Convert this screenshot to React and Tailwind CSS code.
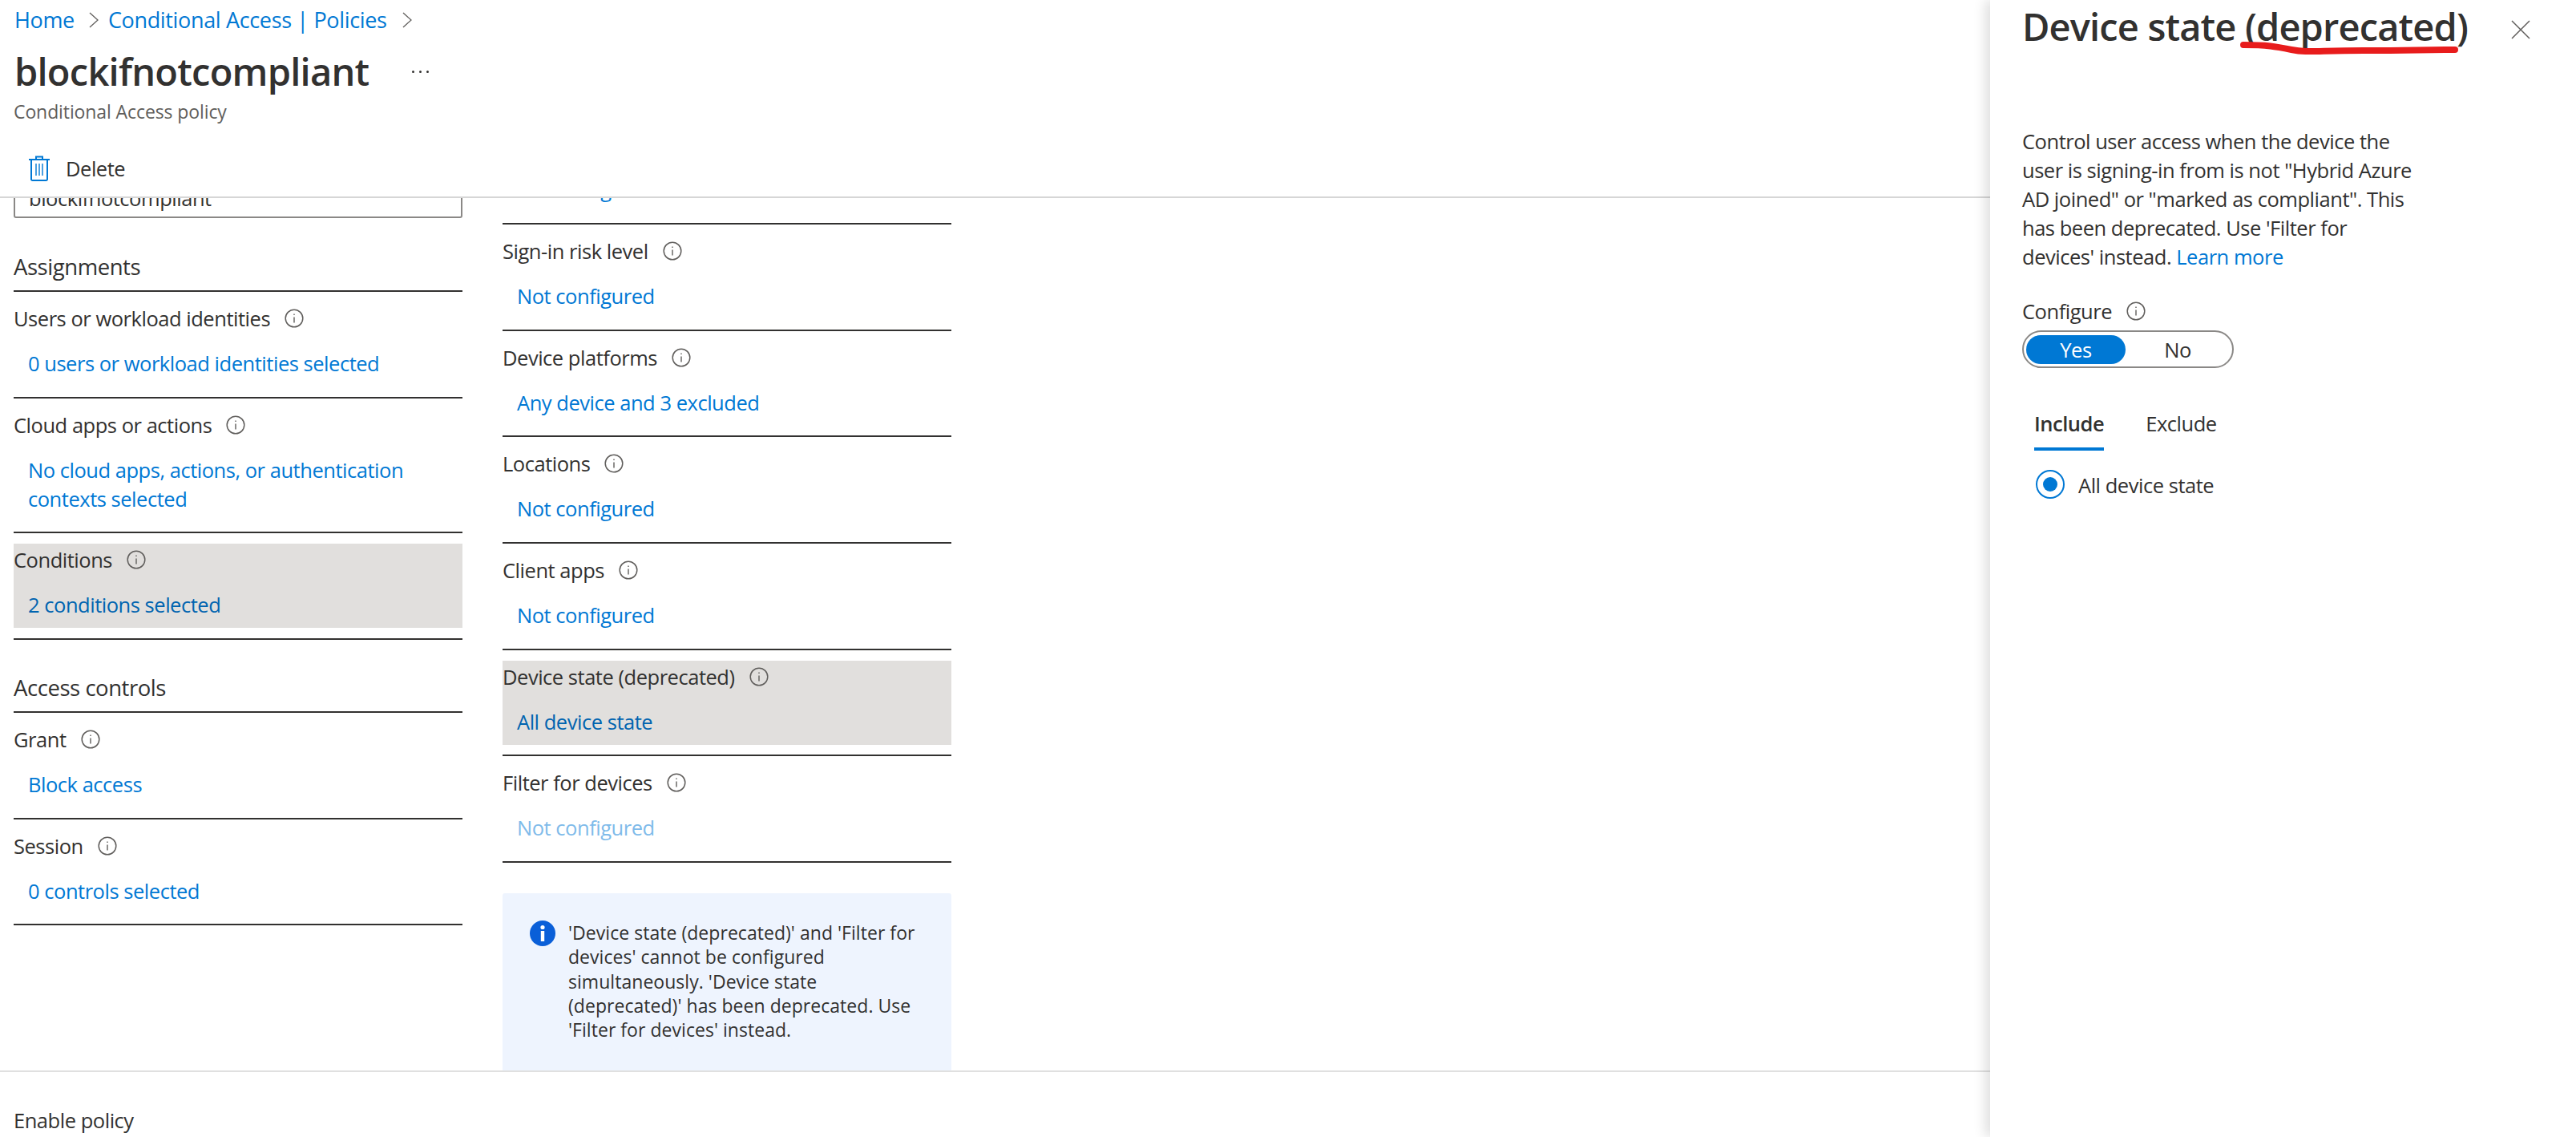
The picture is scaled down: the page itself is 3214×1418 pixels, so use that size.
import React from 'react';

const InfoIcon = () => (
  <svg viewBox="0 0 24 24" className="ml-[18px] h-[24px] w-[24px] shrink-0" fill="none">
    <circle cx="12" cy="12" r="10.8" stroke="#605e5c" strokeWidth="1.5" />
    <path d="M12 10.5v7M12 6.5v1.6" stroke="#605e5c" strokeWidth="1.4" />
  </svg>
);

const Chevron = () => (
  <svg viewBox="0 0 12 20" className="h-[20px] w-[12px]" fill="none">
    <path d="M1 1l10 9-10 9" stroke="#605e5c" strokeWidth="1.3" />
  </svg>
);

const TrashIcon = () => (
  <svg viewBox="0 0 26 32" className="h-[32px] w-[26px]" fill="none" stroke="#0078d4" strokeWidth="2">
    <path d="M0 5h26M9 5V1.5h8V5M3 5v24.5a1.5 1.5 0 0 0 1.5 1.5h17a1.5 1.5 0 0 0 1.5-1.5V5" />
    <path d="M9 10v15M13 10v15M17 10v15" strokeWidth="1.4" />
  </svg>
);

const Row = ({ label, value, selected, disabled }) => (
  <div className="border-b-2 border-[#323130]">
    <div className={`mt-[13px] mb-[12.67px] pt-[2px] pb-[11px] ${selected ? 'bg-[#e1dfdd]' : ''}`}>
      <div className="flex items-center">
        <span>{label}</span>
        <InfoIcon />
      </div>
      <div className={`mt-[20px] pl-[18px] ${selected ? 'text-[#0064b0]' : disabled ? 'text-[#7fbbea]' : 'text-[#0078d4]'}`}>
        {value}
      </div>
    </div>
  </div>
);

const Heading = ({ children, className }) => (
  <div className={`border-b-2 border-[#323130] pb-[11px] text-[27.5px] tracking-[-0.45px] ${className}`}>{children}</div>
);

export default function App() {
  return (
    <div className="flex h-[1418px] w-[3214px] overflow-hidden bg-white font-['Open_Sans',sans-serif] text-[25.5px] leading-[36px] tracking-[-0.47px] text-[#323130]">
      {/* Policy blade */}
      <div className="flex w-[2483px] shrink-0 flex-col">
        <div className="shrink-0 border-b-2 border-[#d6d6d6] pt-[7px] pb-[17px]">
          <div className="flex items-center pl-[18px] text-[27px] tracking-[-0.35px] text-[#0078d4]">
            <span>Home</span>
            <span className="mr-[12px] ml-[18px]"><Chevron /></span>
            <span>Conditional Access | Policies</span>
            <span className="ml-[19px]"><Chevron /></span>
          </div>
          <div className="mt-[16px] flex items-center pl-[18px]">
            <h1 className="text-[47px] leading-[60px] font-semibold tracking-[-0.75px]">blockifnotcompliant</h1>
            <span className="ml-[54px] flex gap-[6px]">
              <i className="h-[3px] w-[3px] rounded-full bg-[#323130]" />
              <i className="h-[3px] w-[3px] rounded-full bg-[#323130]" />
              <i className="h-[3px] w-[3px] rounded-full bg-[#323130]" />
            </span>
          </div>
          <div className="mt-[5px] pl-[17px] text-[23px] leading-[30px] tracking-[-0.1px] text-[#605e5c]">Conditional Access policy</div>
          <div className="mt-[38px] flex items-center pl-[36px]">
            <TrashIcon />
            <span className="ml-[20px]">Delete</span>
          </div>
        </div>

        <div className="min-h-0 flex-1 overflow-hidden">
          <div className="-mt-[40px] flex items-start gap-[50px] pl-[17px]">
            {/* Left column */}
            <div className="w-[560px] shrink-0">
              <div className="mt-[15px] flex h-[50px] items-center rounded-[3px] border-2 border-[#8a8886] pl-[17px]">blockifnotcompliant</div>
              <Heading className="mt-[43px]">Assignments</Heading>
              <Row label="Users or workload identities" value="0 users or workload identities selected" />
              <Row label="Cloud apps or actions" value={<>No cloud apps, actions, or authentication<br />contexts selected</>} />
              <Row label="Conditions" value="2 conditions selected" selected />
              <Heading className="mt-[42px]">Access controls</Heading>
              <Row label="Grant" value="Block access" />
              <Row label="Session" value="0 controls selected" />
            </div>

            {/* Conditions column */}
            <div className="w-[560px] shrink-0">
              <div className="border-b-2 border-[#323130]">
                <div className="mt-[11px] mb-[24px] pl-[18px] text-[#0078d4]">Not configured</div>
              </div>
              <Row label="Sign-in risk level" value="Not configured" />
              <Row label="Device platforms" value="Any device and 3 excluded" />
              <Row label="Locations" value="Not configured" />
              <Row label="Client apps" value="Not configured" />
              <Row label="Device state (deprecated)" value="All device state" selected />
              <Row label="Filter for devices" value="Not configured" disabled />
              <div className="mt-[38px] flex h-[260px] rounded-[3px] bg-[#eef4fe] pt-[34px] pl-[34px] text-[23px] leading-[30.3px] tracking-[0.04px]">
                <svg viewBox="0 0 32 32" className="h-[32px] w-[32px] shrink-0">
                  <circle cx="16" cy="16" r="16" fill="#0a5fd8" />
                  <circle cx="16" cy="8.5" r="2.6" fill="#fff" />
                  <rect x="13.8" y="13" width="4.4" height="13" fill="#fff" />
                </svg>
                <p className="ml-[16px] whitespace-nowrap">
                  'Device state (deprecated)' and 'Filter for<br />
                  devices' cannot be configured<br />
                  simultaneously. 'Device state<br />
                  (deprecated)' has been deprecated. Use<br />
                  'Filter for devices' instead.
                </p>
              </div>
            </div>
          </div>
        </div>

        <div className="h-[83px] shrink-0 border-t-2 border-[#e0e0e0] pt-[42px] pl-[17px]">Enable policy</div>
      </div>

      {/* Device state panel */}
      <div className="relative z-10 flex-1 pl-[40px] shadow-[-6px_0_14px_rgba(0,0,0,0.13)]">
        <div className="flex items-start justify-between pt-[3px] pr-[57px]">
          <h2 className="text-[47px] leading-[60px] font-semibold tracking-[-0.85px]">Device state (deprecated)</h2>
          <svg viewBox="0 0 24 24" className="mt-[22px] h-[24px] w-[24px]" fill="none">
            <path d="M1 1l22 22M23 1L1 23" stroke="#605e5c" strokeWidth="1.5" />
          </svg>
        </div>
        <svg viewBox="0 0 272 20" className="absolute top-[50px] left-[312px] h-[20px] w-[272px]" fill="none">
          <path d="M4 6c30 0 40 2 60 6s30 1 90 1 70-1 114-1" stroke="#e81c1c" strokeWidth="8" strokeLinecap="round" />
        </svg>

        <p className="mt-[95px]">
          Control user access when the device the<br />
          user is signing-in from is not "Hybrid Azure<br />
          AD joined" or "marked as compliant". This<br />
          has been deprecated. Use 'Filter for<br />
          devices' instead. <span className="text-[#0078d4]">Learn more</span>
        </p>

        <div className="mt-[32px] flex items-center">
          <span>Configure</span>
          <InfoIcon />
        </div>
        <div className="mt-[6px] flex h-[47px] w-[264px] items-center rounded-full border-2 border-[#8a8886] px-[3px]">
          <div className="h-[36px] w-[124px] rounded-full bg-[#0078d4] text-center text-white">Yes</div>
          <div className="flex-1 text-center">No</div>
        </div>

        <div className="mt-[51px] ml-[15px] flex gap-[52px]">
          <div className="border-b-4 border-[#0078d4] pb-[12px] font-semibold">Include</div>
          <div>Exclude</div>
        </div>

        <div className="mt-[24px] ml-[17px] flex items-center">
          <div className="flex h-[36px] w-[36px] items-center justify-center rounded-full border-2 border-[#0078d4]">
            <div className="h-[18px] w-[18px] rounded-full bg-[#0078d4]" />
          </div>
          <span className="ml-[17px] translate-y-[1px]">All device state</span>
        </div>
      </div>
    </div>
  );
}
